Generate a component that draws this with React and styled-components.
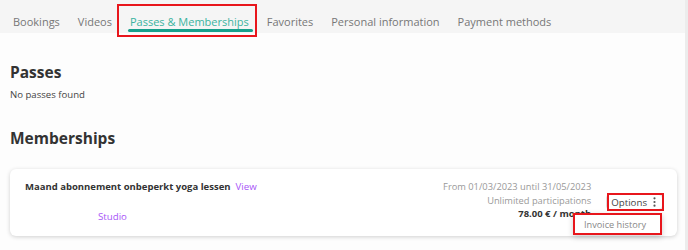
import styled, { createGlobalStyle } from 'styled-components'

const GlobalStyle = createGlobalStyle`
    body {
        margin: 0;
        background: #fdfdfd;
        font-family: "Open Sans", "Noto Sans", sans-serif;
    }
`

const Page = styled.div`
    width: 685px;
    height: 250px;
    border-right: 3px solid #ececec;
    background: #fdfdfd;
    overflow: hidden;
`

const TabBar = styled.nav`
    display: flex;
    gap: 18px;
    height: 33px;
    padding: 0 13px;
    background: #f5f5f5;
`

const Tab = styled.div`
    position: relative;
    display: flex;
    align-items: center;
    padding-top: 9px;
    font-size: 11px;
    color: ${props => props.active ? '#3bb3a0' : '#777'};
    white-space: nowrap;

    &::after {
        content: '';
        display: ${props => props.active ? 'block' : 'none'};
        position: absolute;
        left: -2px;
        right: -4px;
        bottom: 1px;
        height: 3px;
        border-radius: 2px;
        background: #17a08c;
    }
`

const Highlight = styled.span`
    position: absolute;
    border: 2px solid #e8161c;
    pointer-events: none;
    left: ${props => props.l}px;
    right: ${props => props.r}px;
    top: ${props => props.t}px;
    bottom: ${props => props.b}px;
`

const Content = styled.main`
    padding: 28px 8px 0 10px;
`

const Heading = styled.h2`
    margin: 0;
    font-size: 15.5px;
    line-height: 22px;
    font-weight: 700;
    color: #333;
`

const Empty = styled.p`
    margin: 4px 0 25px;
    font-size: 9.6px;
    line-height: 15px;
    color: #444;
`

const Card = styled.div`
    display: flex;
    justify-content: space-between;
    margin-top: 20px;
    height: 67px;
    box-sizing: border-box;
    padding: 11px 14px 0 15px;
    background: #fff;
    border-radius: 6px;
    box-shadow: 0 1px 4px rgba(0, 0, 0, 0.18);
`

const Left = styled.div`
    display: flex;
    flex-direction: column;
    gap: 16px;
`

const Title = styled.div`
    font-size: 9.5px;
    line-height: 14px;
    font-weight: 700;
    color: #333;

    a {
        margin-left: 5px;
        font-weight: 400;
    }
`

const Link = styled.a`
    color: #a855f7;
    font-size: 9.7px;
    line-height: 14px;
    text-decoration: none;
    margin-left: ${props => props.indent || 0}px;
`

const Right = styled.div`
    display: flex;
    gap: 15px;
`

const Details = styled.div`
    display: flex;
    flex-direction: column;
    align-items: flex-end;
    font-size: 9.3px;
    line-height: 13.5px;
    color: #999;

    strong {
        color: #333;
        font-size: 9.5px;
    }
`

const OptionsWrap = styled.div`
    position: relative;
    align-self: flex-start;
    margin-top: 14px;
`

const OptionsButton = styled.button`
    display: flex;
    align-items: center;
    gap: 6px;
    height: 16px;
    padding: 0 6px 0 4px;
    border: 1px solid #ddd;
    border-radius: 4px;
    background: #fff;
    font-family: inherit;
    font-size: 9.7px;
    color: #444;
`

const Menu = styled.div`
    position: absolute;
    top: 19px;
    right: 1px;
    width: 89px;
    height: 22px;
    padding-left: 11px;
    box-sizing: border-box;
    display: flex;
    align-items: center;
    background: #fff;
    box-shadow: 0 2px 6px rgba(0, 0, 0, 0.2);
    font-size: 9.2px;
    color: #888;
    white-space: nowrap;
`

const Dots = () => (
    <svg width="3" height="10" viewBox="0 0 3 10">
        <circle cx="1.5" cy="1.3" r="1.1" fill="#555" />
        <circle cx="1.5" cy="5" r="1.1" fill="#555" />
        <circle cx="1.5" cy="8.7" r="1.1" fill="#555" />
    </svg>
)

const tabs = ['Bookings', 'Videos', 'Passes & Memberships', 'Favorites', 'Personal information', 'Payment methods']

export default function App() {
    return (
        <Page>
            <GlobalStyle />
            <TabBar>
                {tabs.map(t => (
                    <Tab key={t} active={t === 'Passes & Memberships'}>
                        {t}
                        {t === 'Passes & Memberships' && <Highlight l={-13} r={-8} t={4} b={-4} />}
                    </Tab>
                ))}
            </TabBar>
            <Content>
                <Heading>Passes</Heading>
                <Empty>No passes found</Empty>
                <Heading>Memberships</Heading>
                <Card>
                    <Left>
                        <Title>Maand abonnement onbeperkt yoga lessen<Link>View</Link></Title>
                        <Link indent={73}>Studio</Link>
                    </Left>
                    <Right>
                        <Details>
                            <span>From 01/03/2023 until 31/05/2023</span>
                            <span>Unlimited participations</span>
                            <strong>78.00 € / month</strong>
                        </Details>
                        <OptionsWrap>
                            <OptionsButton>Options <Dots /></OptionsButton>
                            <Highlight l={1} r={-1} t={-1} b={-1} />
                            <Menu>
                                Invoice history
                                <Highlight l={0} r={0} t={0} b={0} />
                            </Menu>
                        </OptionsWrap>
                    </Right>
                </Card>
            </Content>
        </Page>
    )
}
